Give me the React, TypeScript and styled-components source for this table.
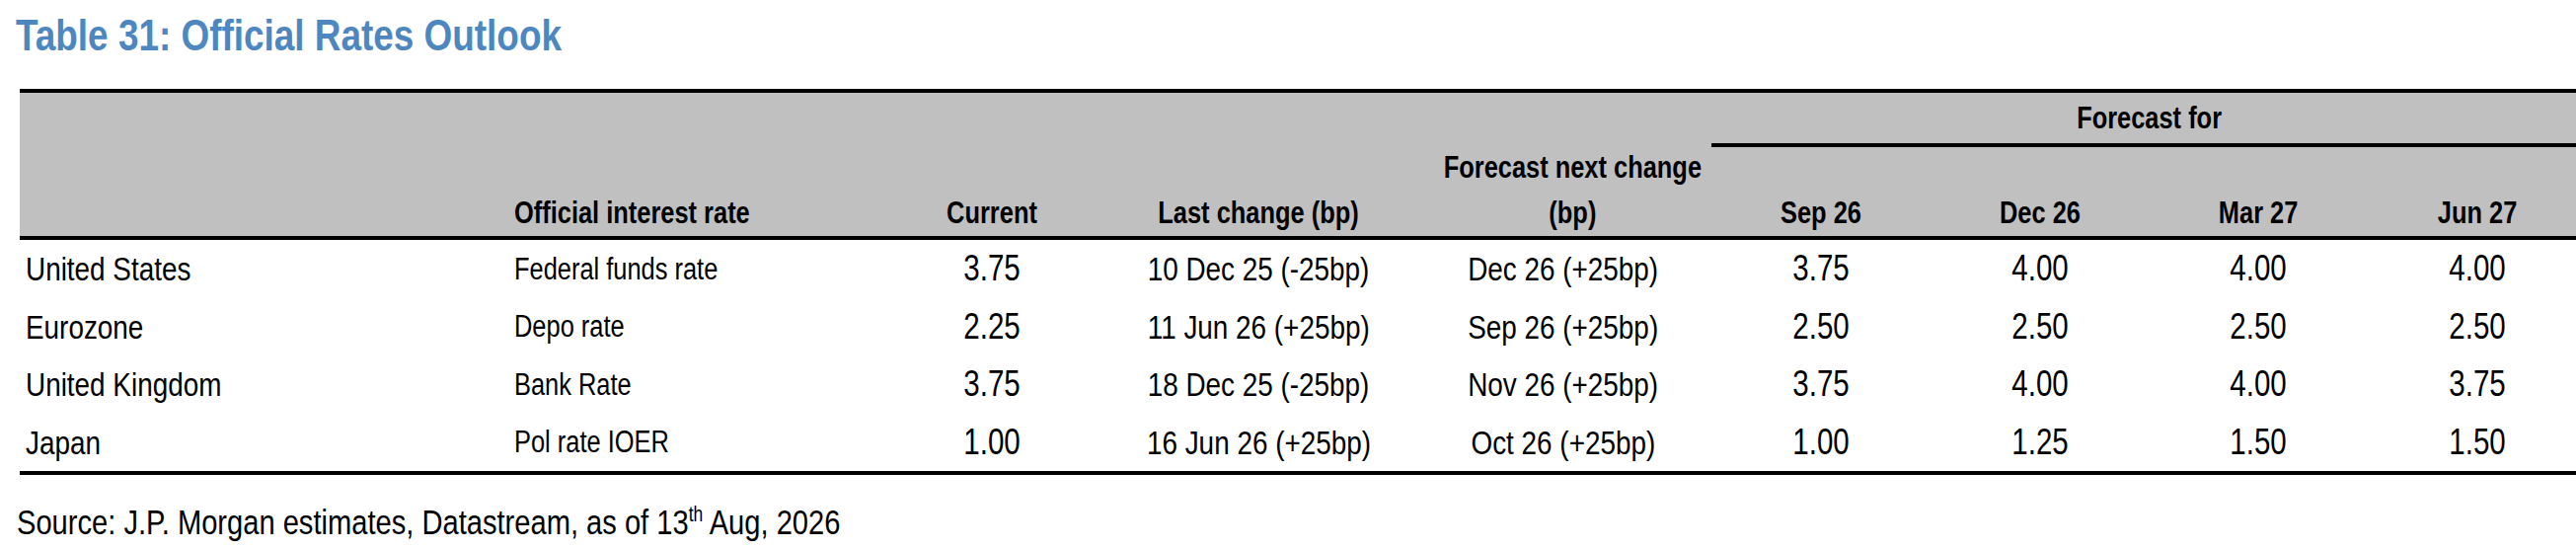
import React from 'react';
import styled, { createGlobalStyle } from 'styled-components';

const FONT = `"Liberation Sans", Arial, sans-serif`;
const COLS = '496px 378px 222px 318px 300px repeat(4, 221.75px)';

const GlobalStyle = createGlobalStyle`
  html, body { margin: 0; padding: 0; background: #ffffff; overflow: hidden; }
  body { font-family: ${FONT}; color: #000; }
`;

/* Arial Narrow look: the regular face squeezed horizontally */
const Narrow = styled.span<{ $origin?: 'left' | 'center' }>`
  display: inline-block;
  white-space: nowrap;
  transform: scaleX(0.82);
  transform-origin: ${(p) => p.$origin ?? 'center'} center;
`;

const Page = styled.div`
  width: 2621px;
  padding: 11px 0 0 16px;
`;

const Title = styled.h1`
  margin: 0;
  font-size: 45px;
  line-height: 50px;
  font-weight: bold;
  color: #4e87c0;
`;

const Table = styled.div`
  margin: 29px 0 0 4px;
  width: 2601px;
`;

const Header = styled.div`
  display: grid;
  grid-template-columns: ${COLS};
  grid-template-rows: 55px 90px;
  background: #c0c0c0;
  border-top: 4px solid #000;
  border-bottom: 4px solid #000;
  font-weight: bold;
  font-size: 31px;
`;

const HeadCell = styled.div<{ $col: number; $left?: boolean }>`
  grid-row: 1 / span 2;
  grid-column: ${(p) => p.$col};
  align-self: end;
  text-align: ${(p) => (p.$left ? 'left' : 'center')};
  padding: ${(p) => (p.$left ? '0 0 5px 5px' : '0 0 5px 0')};
  line-height: 36px;
`;

const WrapHeadCell = styled(HeadCell)`
  line-height: 46px;
  padding-bottom: 0;
`;

const GroupCell = styled.div`
  grid-row: 1;
  grid-column: 6 / span 4;
  border-bottom: 4px solid #000;
  display: flex;
  align-items: center;
  justify-content: center;
  line-height: 36px;
`;

const PeriodCell = styled.div<{ $col: number }>`
  grid-row: 2;
  grid-column: ${(p) => p.$col};
  align-self: end;
  text-align: center;
  padding-bottom: 5px;
  line-height: 36px;
`;

const Body = styled.div`
  border-bottom: 4px solid #000;
`;

const Row = styled.div`
  display: grid;
  grid-template-columns: ${COLS};
  height: 58.5px;
  align-items: center;
`;

const Country = styled.div`
  font-size: 34px;
  line-height: 1;
  padding-left: 6px;
`;

const RateName = styled.div`
  font-size: 31px;
  line-height: 1;
  padding-left: 5px;
`;

const Value = styled.div<{ $size?: number }>`
  font-size: ${(p) => p.$size ?? 36}px;
  line-height: 1;
  text-align: center;
`;

const Source = styled.p`
  margin: 27px 0 0 1px;
  font-size: 35.5px;
  line-height: 42px;
`;

const Sup = styled.sup`
  font-size: 60%;
  vertical-align: 0.6em;
  line-height: 0;
`;

type R = {
  country: string;
  rate: string;
  current: string;
  last: string;
  next: string;
  f: string[];
};

const rows: R[] = [
  { country: 'United States', rate: 'Federal funds rate', current: '3.75', last: '10 Dec 25 (-25bp)', next: 'Dec 26 (+25bp)', f: ['3.75', '4.00', '4.00', '4.00'] },
  { country: 'Eurozone', rate: 'Depo rate', current: '2.25', last: '11 Jun 26 (+25bp)', next: 'Sep 26 (+25bp)', f: ['2.50', '2.50', '2.50', '2.50'] },
  { country: 'United Kingdom', rate: 'Bank Rate', current: '3.75', last: '18 Dec 25 (-25bp)', next: 'Nov 26 (+25bp)', f: ['3.75', '4.00', '4.00', '3.75'] },
  { country: 'Japan', rate: 'Pol rate IOER', current: '1.00', last: '16 Jun 26 (+25bp)', next: 'Oct 26 (+25bp)', f: ['1.00', '1.25', '1.50', '1.50'] },
];

const periods = ['Sep 26', 'Dec 26', 'Mar 27', 'Jun 27'];

export default function App() {
  return (
    <>
      <GlobalStyle />
      <Page>
        <Title>
          <Narrow $origin="left">Table 31: Official Rates Outlook</Narrow>
        </Title>
        <Table>
          <Header>
            <HeadCell $col={2} $left>
              <Narrow $origin="left">Official interest rate</Narrow>
            </HeadCell>
            <HeadCell $col={3}>
              <Narrow>Current</Narrow>
            </HeadCell>
            <HeadCell $col={4}>
              <Narrow>Last change (bp)</Narrow>
            </HeadCell>
            <WrapHeadCell $col={5}>
              <Narrow>
                Forecast next change
                <br />
                (bp)
              </Narrow>
            </WrapHeadCell>
            <GroupCell>
              <Narrow>Forecast for</Narrow>
            </GroupCell>
            {periods.map((p, i) => (
              <PeriodCell key={p} $col={6 + i}>
                <Narrow>{p}</Narrow>
              </PeriodCell>
            ))}
          </Header>
          <Body>
            {rows.map((r) => (
              <Row key={r.country}>
                <Country>
                  <Narrow $origin="left">{r.country}</Narrow>
                </Country>
                <RateName>
                  <Narrow $origin="left">{r.rate}</Narrow>
                </RateName>
                <Value>
                  <Narrow>{r.current}</Narrow>
                </Value>
                <Value $size={34}>
                  <Narrow>{r.last}</Narrow>
                </Value>
                <Value $size={34}>
                  <Narrow>{r.next}</Narrow>
                </Value>
                {r.f.map((v, i) => (
                  <Value key={i}>
                    <Narrow>{v}</Narrow>
                  </Value>
                ))}
              </Row>
            ))}
          </Body>
        </Table>
        <Source>
          <Narrow $origin="left">
            Source: J.P. Morgan estimates, Datastream, as of 13<Sup>th</Sup> Aug, 2026
          </Narrow>
        </Source>
      </Page>
    </>
  );
}
